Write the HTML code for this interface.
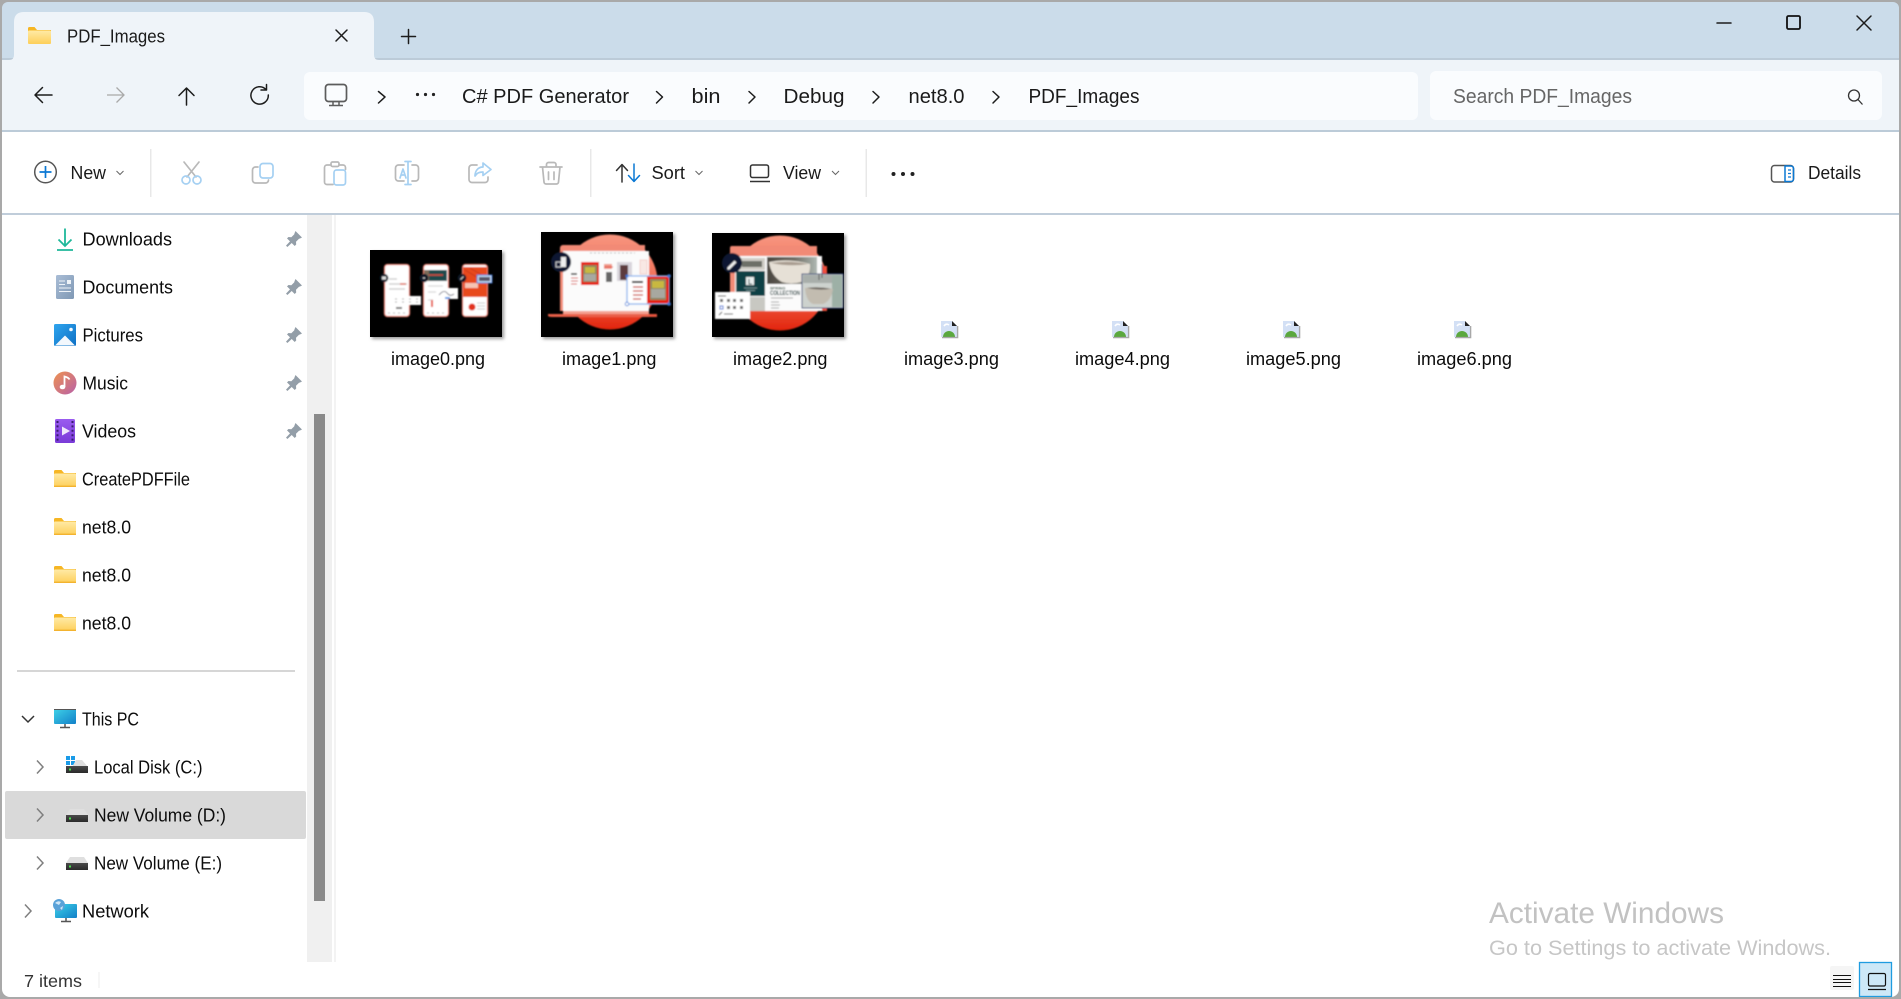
<!DOCTYPE html>
<html lang="en">
<head>
<meta charset="utf-8">
<title>PDF_Images - File Explorer</title>
<style>
html,body{margin:0;padding:0;width:1901px;height:999px;overflow:hidden;background:#fff}
svg{position:absolute;left:0;top:0;display:block}
text{font-family:"Liberation Sans",sans-serif;fill:#1b1b1b}
.side{font-size:18.5px;fill:#0c0c0c}
.crumb{font-size:20.5px;fill:#1a1a1a}
.cmd{font-size:18px;fill:#1a1a1a}
.file{font-size:18px;fill:#0c0c0c}
.ln{fill:none;stroke:#1c1c1c;stroke-width:1.5;stroke-linecap:round;stroke-linejoin:round}
.gr{fill:none;stroke:#b9b9b9;stroke-width:1.7;stroke-linecap:round;stroke-linejoin:round}
.bl{fill:none;stroke:#a5d0f2;stroke-width:1.7;stroke-linecap:round;stroke-linejoin:round}
</style>
</head>
<body>
<svg width="1901" height="999" viewBox="0 0 1901 999" xmlns="http://www.w3.org/2000/svg">
<defs>
<linearGradient id="fold" x1="0" y1="0" x2="0" y2="1"><stop offset="0" stop-color="#ffeaa6"/><stop offset="1" stop-color="#fdcf5a"/></linearGradient>
<linearGradient id="circ" x1="0" y1="0" x2="0" y2="1"><stop offset="0" stop-color="#f7957f"/><stop offset=".62" stop-color="#f0644b"/><stop offset="1" stop-color="#e2240c"/></linearGradient>
<linearGradient id="doc" x1="0" y1="0" x2="1" y2="1"><stop offset="0" stop-color="#a9bdd6"/><stop offset="1" stop-color="#7f98b4"/></linearGradient>
<linearGradient id="pic" x1="0" y1="0" x2="1" y2="1"><stop offset="0" stop-color="#2fa5ee"/><stop offset="1" stop-color="#0d6fc4"/></linearGradient>
<linearGradient id="mus" x1="0" y1="0" x2="1" y2="1"><stop offset="0" stop-color="#ee9250"/><stop offset="1" stop-color="#b860a8"/></linearGradient>
<linearGradient id="vid" x1="0" y1="0" x2="0" y2="1"><stop offset="0" stop-color="#9a5cf0"/><stop offset="1" stop-color="#7a3bd8"/></linearGradient>
<linearGradient id="pc" x1="0" y1="0" x2="1" y2="1"><stop offset="0" stop-color="#3ed2e8"/><stop offset="1" stop-color="#1280c8"/></linearGradient>
<linearGradient id="drv" x1="0" y1="0" x2="0" y2="1"><stop offset="0" stop-color="#4a4a4a"/><stop offset="1" stop-color="#2a2a2a"/></linearGradient>
<linearGradient id="tub" x1="0" y1="0" x2="1" y2="0"><stop offset="0" stop-color="#4a463f"/><stop offset=".55" stop-color="#6f6c64"/><stop offset="1" stop-color="#aeb8b2"/></linearGradient>
<filter id="b" x="-5%" y="-5%" width="110%" height="110%"><feGaussianBlur stdDeviation=".7"/></filter>
<filter id="sh" x="-10%" y="-10%" width="120%" height="120%"><feGaussianBlur stdDeviation="1.6"/></filter>
<clipPath id="c1"><rect x="541" y="232" width="132" height="105"/></clipPath>
<clipPath id="c2"><rect x="712" y="233" width="132" height="104"/></clipPath>
<g id="pin"><path d="M9.5 0 16 6.5l-2 1-1 .2-3 3 .2 2.8-1.5 1.5-3-3L1.4 16 0 14.6l4-4.2-3-3L2.5 6l2.8.2 3-3 .2-1z" fill="#939ea8"/></g>
<g id="folder"><path d="M0 3V1.500A1.500 1.500 0 0 1 1.500 0h6L10 3h12v2H0z" fill="#f6b624"/><rect x="0" y="3.500" width="22" height="13.500" rx="1" fill="url(#fold)"/><rect x="0" y="15.600" width="22" height="1.400" fill="#f3b32f"/></g>
<g id="drive"><path d="M4 0h14l4 6H0z" fill="#dfdfdf"/><rect x="0" y="6" width="22" height="7" fill="url(#drv)"/><rect x="3" y="8.500" width="2" height="2" fill="#47e04c"/></g>
<g id="broken"><path d="M0 0h11l5 5v11H0z" fill="#d3e0f5"/><path d="M11 0l5 5h-5z" fill="#222"/><path d="M2 16a6 6 0 0 1 12 0z" fill="#5ba83e"/><path d="M3 5q2-3 5-1" stroke="#fff" stroke-width="1.600" fill="none"/><path d="M1 16.600h15.600V5" stroke="#a8a8a8" stroke-width="1.400" fill="none"/></g>
</defs>

<!-- Window background -->
<rect width="1901" height="999" fill="#fff"/>
<rect x="0" y="0" width="1901" height="60" fill="#cbdcea"/>
<rect x="0" y="60" width="1901" height="70" fill="#eff4f9"/>
<rect x="0" y="58" width="1901" height="2" fill="#bccbd8"/>
<rect x="0" y="130" width="1901" height="2" fill="#bccbd8"/>
<rect x="0" y="213" width="1901" height="2" fill="#c0cdda"/>

<!-- Tab -->
<path d="M9 60q5 0 5-5V22q0-10 10-10h340q10 0 10 10v33q0 5 5 5z" fill="#eff4f9"/>
<g transform="translate(28,27)"><path d="M0 3V1.500A1.500 1.500 0 0 1 1.500 0h5L9 3h14v2H0z" fill="#f6b624"/><rect y="3.500" width="23" height="13.500" rx="1" fill="url(#fold)"/></g>
<text x="67" y="42.500" font-size="18" textLength="98" lengthAdjust="spacingAndGlyphs">PDF_Images</text>
<path class="ln" d="M336 30l11 11M347 30l-11 11" stroke-width="1.300"/>
<path class="ln" d="M408.500 29.500v14M401.500 36.500h14" stroke-width="1.300"/>

<!-- Window controls -->
<path class="ln" d="M1717 23h14" stroke-width="1.300"/>
<rect x="1787" y="16" width="13" height="13" rx="1.500" fill="none" stroke="#111" stroke-width="1.800"/>
<path class="ln" d="M1857 16l14 14M1871 16l-14 14" stroke-width="1.300"/>

<!-- Nav icons -->
<path class="ln" d="M52 95H35M42.500 87.500 35 95l7.500 7.500" stroke-width="1.300"/>
<path d="M107 95h17M116.500 87.500 124 95l-7.500 7.500" fill="none" stroke="#a9a9a9" stroke-width="1.300"/>
<path class="ln" d="M186.500 105V88M179 95.500l7.500-7.500 7.500 7.500" stroke-width="1.300"/>
<path class="ln" d="M266 89.500A8.700 8.700 0 1 0 268.300 95M266.500 84.500v5.500h-5.500" stroke-width="1.300"/>

<!-- Address bar + search -->
<rect x="304" y="72" width="1114" height="48" rx="6" fill="#fafcfe"/>
<rect x="1430" y="71" width="452" height="49" rx="6" fill="#fafcfe"/>
<rect x="325.500" y="84.500" width="21" height="17" rx="3" fill="none" stroke="#5c5c5c" stroke-width="1.700"/>
<path d="M333 102v3M339 102v3M329 105.500h14" stroke="#5c5c5c" stroke-width="1.500" fill="none"/>
<path class="ln" d="M378.500 91.500 385 97l-6.500 6" stroke-width="1.600"/>
<circle cx="417.500" cy="94.500" r="1.600" fill="#222"/><circle cx="425.500" cy="94.500" r="1.600" fill="#222"/><circle cx="433.500" cy="94.500" r="1.600" fill="#222"/>
<text class="crumb" x="462" y="103" textLength="167" lengthAdjust="spacingAndGlyphs">C# PDF Generator</text>
<path class="ln" d="M656.500 91.500 662.500 97l-6 6" stroke-width="1.500"/>
<text class="crumb" x="691.500" y="103" textLength="29" lengthAdjust="spacingAndGlyphs">bin</text>
<path class="ln" d="M749 91.500 755 97l-6 6" stroke-width="1.500"/>
<text class="crumb" x="783.500" y="103" textLength="61" lengthAdjust="spacingAndGlyphs">Debug</text>
<path class="ln" d="M873 91.500 879 97l-6 6" stroke-width="1.500"/>
<text class="crumb" x="908.500" y="103" textLength="56" lengthAdjust="spacingAndGlyphs">net8.0</text>
<path class="ln" d="M993 91.500 999 97l-6 6" stroke-width="1.500"/>
<text class="crumb" x="1028.500" y="103" textLength="111" lengthAdjust="spacingAndGlyphs">PDF_Images</text>
<text class="crumb" x="1453" y="103" textLength="179" lengthAdjust="spacingAndGlyphs" style="fill:#666">Search PDF_Images</text>
<circle cx="1854" cy="95.500" r="5.500" fill="none" stroke="#333" stroke-width="1.300"/>
<path d="M1858 99.500 1862.500 104.500" stroke="#333" stroke-width="1.300"/>

<!-- Command bar -->
<circle cx="45.500" cy="172" r="10.800" fill="none" stroke="#555" stroke-width="1.500"/>
<path d="M45.500 166v12M39.500 172h12" stroke="#0a78d4" stroke-width="1.700"/>
<text class="cmd" x="70.500" y="179" textLength="35.500" lengthAdjust="spacingAndGlyphs">New</text>
<path d="M116.500 171l3.500 3.500 3.500-3.500" fill="none" stroke="#666" stroke-width="1"/>
<rect x="150" y="149" width="1.500" height="48" fill="#e8e8e8"/>
<rect x="590" y="149" width="1.500" height="48" fill="#e8e8e8"/>
<rect x="865.500" y="149" width="1.500" height="48" fill="#e8e8e8"/>

<!-- scissors -->
<path class="gr" d="M184 162l12 15M199 162l-12 15"/>
<circle class="bl" cx="186" cy="180" r="4"/><circle class="bl" cx="197" cy="180" r="4"/>
<!-- copy -->
<path class="gr" d="M258 167h-2.500a3 3 0 0 0-3 3v10a3 3 0 0 0 3 3h10a3 3 0 0 0 3-3"/>
<rect class="bl" x="260" y="163.500" width="13" height="14.500" rx="3"/>
<!-- paste -->
<path class="gr" d="M331 165h-4a2.500 2.500 0 0 0-2.500 2.500V182a2.500 2.500 0 0 0 2.500 2.500h6M339 165h4a2.500 2.500 0 0 1 2.500 2.500v2"/>
<rect class="gr" x="331" y="162" width="8" height="4.500" rx="1.500"/>
<rect class="bl" x="334" y="170" width="11.500" height="15" rx="2.500"/>
<!-- rename -->
<path class="gr" d="M404 165h-5.500a3 3 0 0 0-3 3v10a3 3 0 0 0 3 3h5.500M412 165h3.500a3 3 0 0 1 3 3v10a3 3 0 0 1-3 3H412"/>
<path class="bl" d="M405 161.500h6M405 184.500h6M408 161.500v23M400 178l3-9 3 9M401 175h4"/>
<!-- share -->
<path class="gr" d="M477 165h-5a3 3 0 0 0-3 3v11.500a3 3 0 0 0 3 3h13a3 3 0 0 0 3-3V177"/>
<path class="bl" d="M483 163l8 6.500-8 6v-3.500c-4 0-6 1-8 4 0-5 3-9 8-9z"/>
<!-- delete -->
<path class="gr" d="M540 167h22M546.500 167v-2.500a2 2 0 0 1 2-2h5.500a2 2 0 0 1 2 2v2M542.500 167l1.500 15a2 2 0 0 0 2 2h10.500a2 2 0 0 0 2-2l1.500-15M548.500 172v7.500M554 172v7.500"/>

<!-- Sort -->
<path class="ln" d="M622 182v-17M616.500 170.500l5.500-6 5.500 6" stroke-width="1.300" style="stroke:#333"/>
<path d="M634 164v17M628.500 175.500l5.500 6 5.500-6" fill="none" stroke="#0a78d4" stroke-width="1.500" stroke-linecap="round" stroke-linejoin="round"/>
<text class="cmd" x="651.500" y="179" textLength="33.500" lengthAdjust="spacingAndGlyphs">Sort</text>
<path d="M695.500 171l3.500 3.500 3.500-3.500" fill="none" stroke="#666" stroke-width="1"/>
<!-- View -->
<rect x="750.500" y="165" width="18" height="12.500" rx="2" fill="none" stroke="#333" stroke-width="1.500"/>
<path d="M750 181.500h20" stroke="#333" stroke-width="1.500"/>
<text class="cmd" x="783" y="179" textLength="38" lengthAdjust="spacingAndGlyphs">View</text>
<path d="M832 171l3.500 3.500 3.500-3.500" fill="none" stroke="#666" stroke-width="1"/>
<circle cx="893.500" cy="174" r="2" fill="#222"/><circle cx="903" cy="174" r="2" fill="#222"/><circle cx="912.500" cy="174" r="2" fill="#222"/>
<!-- Details -->
<rect x="1771.500" y="165.500" width="22" height="16.500" rx="3" fill="none" stroke="#555" stroke-width="1.500"/>
<path d="M1785 166h6a2.500 2.500 0 0 1 2.500 2.500V179a2.500 2.500 0 0 1-2.500 2.500h-6z" fill="none" stroke="#0a78d4" stroke-width="1.500"/>
<path d="M1788 170h3M1788 173.500h3M1788 177h3" stroke="#0a78d4" stroke-width="1.300"/>
<text class="cmd" x="1808" y="179" textLength="53" lengthAdjust="spacingAndGlyphs">Details</text>

<!-- Sidebar scrollbar -->
<rect x="307" y="215" width="25" height="747" fill="#f0f0f0"/>
<rect x="334" y="215" width="2" height="747" fill="#f3f3f3"/>
<rect x="314" y="414" width="11" height="487" fill="#8a8a8a"/>

<!-- Sidebar selection -->
<rect x="5" y="791" width="301" height="48" rx="2" fill="#d9d9d9"/>

<!-- Sidebar icons -->
<path d="M65 228.500v17M58.500 239.500l6.500 6.500 6.500-6.500M57 250h16" fill="none" stroke="#1fb89a" stroke-width="1.800"/>
<rect x="56" y="275" width="18" height="24" rx="1.500" fill="url(#doc)"/>
<path d="M59 281h6M59 284.500h6M59 288h12M59 291.500h12" stroke="#eef3f8" stroke-width="1.100"/><rect x="67" y="280" width="4" height="4" fill="#eef3f8"/>
<rect x="54" y="324" width="22" height="22" rx="1.500" fill="url(#pic)"/>
<path d="M55 345.500 65 335.500l10 10z" fill="#f3f8fd"/><circle cx="71" cy="329.500" r="1.800" fill="#f3f8fd"/>
<circle cx="65" cy="383" r="11.500" fill="url(#mus)"/>
<path d="M64.500 387V376.500c2 .5 4 1 5 3" fill="none" stroke="#fff" stroke-width="1.800"/><ellipse cx="62.500" cy="387" rx="2.800" ry="2.300" fill="#fff"/>
<rect x="55" y="419" width="20" height="24" rx="1.500" fill="url(#vid)"/>
<path d="M62 426.500v9l8-4.500z" fill="#efe8fb"/>
<path d="M57.500 421v20M72.500 421v20" stroke="#3a1b70" stroke-width="2" stroke-dasharray="2 2.400"/>
<use href="#pin" x="286" y="231"/><use href="#pin" x="286" y="279"/><use href="#pin" x="286" y="327"/><use href="#pin" x="286" y="375"/><use href="#pin" x="286" y="423"/>
<use href="#folder" x="54" y="470"/><use href="#folder" x="54" y="518"/><use href="#folder" x="54" y="566"/><use href="#folder" x="54" y="614"/>

<rect x="17" y="670" width="278" height="2" fill="#d6d6d6"/>

<path d="M22 716l6 6 6-6" fill="none" stroke="#333" stroke-width="1.500"/>
<rect x="54" y="709" width="22" height="15" rx="1" fill="url(#pc)"/><path d="M54 709.500h22" stroke="#555" stroke-width="1"/>
<path d="M65 724v3M60 727.500h10" stroke="#555" stroke-width="1.500"/>
<path d="M37 760.500l6 6.500-6 6.500M37 808.500l6 6.500-6 6.500M37 856.500l6 6.500-6 6.500M25 904.500l6 6.500-6 6.500" fill="none" stroke="#7f7f7f" stroke-width="1.500"/>
<rect x="66" y="756" width="4" height="4" fill="#1a9be8"/><rect x="71" y="756" width="4" height="4" fill="#1a9be8"/><rect x="66" y="761" width="4" height="4" fill="#1a9be8"/><rect x="71" y="761" width="4" height="4" fill="#1a9be8"/>
<path d="M76 760h6l6 7H72z" fill="#dfdfdf"/><rect x="66" y="766" width="22" height="7" fill="url(#drv)"/><rect x="69" y="768.500" width="2" height="2" fill="#47e04c"/>
<use href="#drive" x="66" y="809"/><use href="#drive" x="66" y="857"/>
<rect x="55" y="904" width="22" height="14" rx="1" fill="url(#pc)"/>
<path d="M66 918v3M61 921.500h10" stroke="#555" stroke-width="1.500"/>
<circle cx="59" cy="905" r="6" fill="#5aa2d8"/><path d="M55 903q3-3 6-1l-2 3zM60 908l3-2-1 4z" fill="#cfe6f7"/>

<!-- Sidebar text -->
<text class="side" x="82.500" y="245.500" textLength="89.500" lengthAdjust="spacingAndGlyphs">Downloads</text>
<text class="side" x="82.500" y="293.500" textLength="90.500" lengthAdjust="spacingAndGlyphs">Documents</text>
<text class="side" x="82.500" y="341.500" textLength="60.500" lengthAdjust="spacingAndGlyphs">Pictures</text>
<text class="side" x="82.500" y="389.500" textLength="45.500" lengthAdjust="spacingAndGlyphs">Music</text>
<text class="side" x="82" y="437.500" textLength="54" lengthAdjust="spacingAndGlyphs">Videos</text>
<text class="side" x="82" y="485.500" textLength="108" lengthAdjust="spacingAndGlyphs">CreatePDFFile</text>
<text class="side" x="82" y="533.500" textLength="49" lengthAdjust="spacingAndGlyphs">net8.0</text>
<text class="side" x="82" y="581.500" textLength="49" lengthAdjust="spacingAndGlyphs">net8.0</text>
<text class="side" x="82" y="629.500" textLength="49" lengthAdjust="spacingAndGlyphs">net8.0</text>
<text class="side" x="82" y="725.500" textLength="57" lengthAdjust="spacingAndGlyphs">This PC</text>
<text class="side" x="94" y="773.500" textLength="108.500" lengthAdjust="spacingAndGlyphs">Local Disk (C:)</text>
<text class="side" x="94" y="821.500" textLength="132" lengthAdjust="spacingAndGlyphs">New Volume (D:)</text>
<text class="side" x="94" y="869.500" textLength="128" lengthAdjust="spacingAndGlyphs">New Volume (E:)</text>
<text class="side" x="82" y="917.500" textLength="67" lengthAdjust="spacingAndGlyphs">Network</text>

<!-- Thumbnail 0 -->
<rect x="372" y="252" width="132" height="87" fill="#999" filter="url(#sh)"/>
<rect x="370" y="250" width="132" height="87" fill="#000"/>
<g filter="url(#b)">
<rect x="384.500" y="264.500" width="25" height="52" rx="3" fill="#fff" stroke="#ec8070" stroke-width="1.300"/>
<rect x="423.500" y="264.500" width="25" height="52" rx="3" fill="#fff" stroke="#ec8070" stroke-width="1.300"/>
<rect x="462.500" y="264.500" width="25" height="52" rx="3" fill="#fff" stroke="#ec8070" stroke-width="1.300"/>
<rect x="463" y="267" width="24" height="30" fill="#e8481f"/>
<path d="M465 270l20 12M470 268l17 10" stroke="#c8381a" stroke-width="1"/>
<rect x="465" y="283" width="13" height="5" fill="#f6c4b4"/>
<circle cx="472" cy="307" r="3.500" fill="#e2301a"/>
<path d="M477 303h8M477 306h8M477 309h8" stroke="#bbb" stroke-width=".8"/>
<rect x="428" y="270" width="19" height="11" fill="#1b4a4c"/><rect x="424" y="270" width="5" height="11" fill="#7b6a58"/>
<path d="M429 275h14" stroke="#d64a3a" stroke-width="1.500"/>
<path d="M389 279h8M389 284h18M389 289h16" stroke="#c8c8c8" stroke-width="1.200"/><path d="M400 284h6" stroke="#e06a58" stroke-width="1.500"/>
<path d="M428 286h15M428 292h10M428 300h5" stroke="#d8d8d8" stroke-width="1.200"/>
<rect x="431" y="300" width="2" height="7" fill="#e8503a"/>
<path d="M388 313h20M427 313h20" stroke="#b0b0b0" stroke-width="1" stroke-dasharray="2 3"/>
<rect x="392" y="296" width="29" height="9" fill="#fff"/>
<path d="M395 299h24M395 302h24" stroke="#aaa" stroke-width="1" stroke-dasharray="2 5"/>
<rect x="396" y="307" width="6" height="2" fill="#777"/>
<rect x="436" y="288" width="22" height="11" fill="#fff"/>
<path d="M439 295q5-6 8-2t7 1" fill="none" stroke="#667" stroke-width=".8"/><rect x="445" y="297" width="5" height="2" fill="#5a9be8"/>
<rect x="477" y="275" width="15" height="8" fill="#bcd3f0" stroke="#3b78d8" stroke-width=".8"/><rect x="479" y="277" width="11" height="4" fill="#556"/>
<circle cx="384" cy="278" r="4.300" fill="#0c1526"/><circle cx="424" cy="278" r="4.300" fill="#0c1526"/><circle cx="462" cy="278" r="4.300" fill="#0c1526"/>
<rect x="382" y="276.500" width="4" height="3" fill="#ddd"/><rect x="423" y="277.500" width="2" height="1" fill="#ddd"/><path d="M460.500 279.500l3-3" stroke="#ddd"/>
</g>

<!-- Thumbnail 1 -->
<rect x="543" y="234" width="132" height="105" fill="#999" filter="url(#sh)"/>
<rect x="541" y="232" width="132" height="105" fill="#000"/>
<g clip-path="url(#c1)"><g filter="url(#b)">
<circle cx="610" cy="282" r="47.500" fill="url(#circ)"/>
<path d="M561 245h24l60 0v6h-82v60h-3v-63a3 3 0 0 1 3-3z" fill="#f28a76"/>
<rect x="563" y="251" width="86" height="60" fill="#fbfbfb"/>
<path d="M563 311h86v3h-86z" fill="#f4a090"/>
<path d="M548 314h101v3H552q-4 0-4-1.500z" fill="#ea6048"/>
<rect x="649" y="314" width="8" height="3" fill="#e8543c"/>
<rect x="581" y="262" width="18" height="23" fill="#e61a0a"/><rect x="583" y="265" width="14" height="17" fill="#8c8560"/><rect x="585" y="267" width="10" height="6" fill="#c8b840"/><rect x="584" y="274" width="12" height="7" fill="#a8a8a0"/>
<rect x="570" y="272" width="9" height="13" fill="#fff"/><path d="M571 274h6" stroke="#222" stroke-width="1.500"/><path d="M571 278h7M571 281h7M571 284h6" stroke="#d84030" stroke-width="1"/>
<rect x="604" y="264" width="8" height="5" fill="#f09888"/><rect x="606" y="272" width="6" height="10" fill="#666"/><path d="M604 267h9" stroke="#e04030"/>
<rect x="617" y="262" width="15" height="19" fill="#d8d4dc"/><rect x="620" y="265" width="8" height="15" fill="#5c3a3c"/>
<rect x="640" y="260" width="7" height="14" fill="#f8e8e4" stroke="#eeb0a8" stroke-width=".5"/>
<path d="M590 253h45" stroke="#bbb" stroke-width="1" stroke-dasharray="2 2"/>
<rect x="627" y="276" width="42" height="28" fill="#fff" stroke="#8ab4ee" stroke-width="1.300"/>
<rect x="647" y="276.500" width="22" height="27" fill="#e61a0a"/><rect x="650" y="279" width="16" height="21" fill="#8c8560"/><rect x="652" y="281" width="12" height="7" fill="#c8b840"/><rect x="651" y="289" width="14" height="9" fill="#a8a8a0"/>
<path d="M632 282h11" stroke="#222" stroke-width="2"/><path d="M633 287h10M633 291h10M633 295h10M633 299h8" stroke="#cc4030" stroke-width="1.200"/>
<circle cx="627" cy="304" r="1.800" fill="#fff" stroke="#3b78d8" stroke-width=".8"/><circle cx="669" cy="276" r="1.800" fill="#3b78d8"/><circle cx="669" cy="304" r="1.800" fill="#3b78d8"/><circle cx="627" cy="276" r="1.500" fill="#3b78d8"/>
<circle cx="561" cy="262" r="10" fill="#0a1830"/>
<rect x="556" y="262" width="5" height="5" fill="none" stroke="#eee" stroke-width=".8"/><rect x="561" y="257" width="5" height="10" fill="#eee"/>
</g></g>

<!-- Thumbnail 2 -->
<rect x="714" y="235" width="132" height="104" fill="#999" filter="url(#sh)"/>
<rect x="712" y="233" width="132" height="104" fill="#000"/>
<g clip-path="url(#c2)"><g filter="url(#b)">
<circle cx="780" cy="283" r="47.500" fill="url(#circ)"/>
<path d="M732 246h85v10h-82v55h-5v-63a2 2 0 0 1 2-2z" fill="#f28a76"/>
<rect x="735" y="256" width="87" height="55" fill="#fbfbfb"/>
<rect x="822" y="266" width="5" height="45" fill="#f0503a"/>
<rect x="737" y="258" width="28" height="12" fill="#cfcdc6"/><rect x="742" y="261" width="20" height="6" fill="#6d7068"/>
<rect x="736" y="271" width="29" height="25" fill="#0f4045"/>
<rect x="746" y="277" width="8" height="8" fill="#e8eeee"/><path d="M749 279v5h3" stroke="#0f4045" stroke-width="1" fill="none"/>
<path d="M744 288h13M746 290.500h9" stroke="#8fa8aa" stroke-width=".8"/>
<rect x="736" y="297" width="29" height="14" fill="#c8c8c2"/>
<rect x="767" y="257" width="50" height="27" fill="url(#tub)"/>
<path d="M769 262q20-4 41 2q1 12-9 18q-10 3-19 0q-11-6-13-20z" fill="#e6e0d6"/><path d="M771 263q18-3 37 1q-18 3-37-1z" fill="#a89c90"/>
<text x="770" y="289.500" font-size="4" font-family="Liberation Serif" style="fill:#243" font-weight="700">SPRING</text>
<text x="770" y="295" font-size="6.500" font-family="Liberation Serif" style="fill:#133" font-weight="700" textLength="30" lengthAdjust="spacingAndGlyphs">COLLECTION</text>
<path d="M771 298h22M771 302h8M771 305h9M771 308h8" stroke="#888" stroke-width=".8"/>
<rect x="802" y="274" width="41" height="34" fill="#cdd2ce" stroke="#24407a" stroke-width="1"/>
<rect x="803" y="275" width="39" height="8" fill="#a8aeaa"/><rect x="832" y="275" width="10" height="32" fill="#9db0a6"/>
<path d="M805 288q14-2 28 1q-2 12-10 15h-10q-7-3-8-16z" fill="#c2bcb0"/><path d="M807 288q12-1.500 24 .8q-12 2-24-.8z" fill="#6a655e"/>
<path d="M819 280v-6M822 272l0 6" stroke="#555" stroke-width="1"/>
<path d="M822 274v-10" stroke="#55618a" stroke-width="1"/>
<rect x="715" y="292" width="35" height="27" fill="#fff"/>
<path d="M718 296h8" stroke="#333" stroke-width="1"/>
<path d="M720 299h3v3h-3zM727 299h3v3h-3zM733 299h3v3h-3zM740 299h3v3h-3zM727 306h3v3h-3zM733 306h3v3h-3zM740 306h3v3h-3z" fill="#6b6b6b"/>
<rect x="720" y="306" width="3" height="3" fill="none" stroke="#2a6ed8" stroke-width="1"/>
<path d="M719 315l3-3M724 314h9" stroke="#444" stroke-width="1"/>
<circle cx="732" cy="263" r="10" fill="#0a1830"/>
<path d="M727.500 267.500l7-7 2 2-7 7h-2z" fill="#eee"/>
</g></g>

<!-- Broken icons -->
<use href="#broken" x="941" y="321"/><use href="#broken" x="1112" y="321"/><use href="#broken" x="1283" y="321"/><use href="#broken" x="1454" y="321"/>

<!-- File names -->
<text class="file" x="391" y="365" textLength="94" lengthAdjust="spacingAndGlyphs">image0.png</text>
<text class="file" x="562" y="365" textLength="94.500" lengthAdjust="spacingAndGlyphs">image1.png</text>
<text class="file" x="733" y="365" textLength="94.500" lengthAdjust="spacingAndGlyphs">image2.png</text>
<text class="file" x="904" y="365" textLength="95" lengthAdjust="spacingAndGlyphs">image3.png</text>
<text class="file" x="1075" y="365" textLength="95" lengthAdjust="spacingAndGlyphs">image4.png</text>
<text class="file" x="1246" y="365" textLength="95" lengthAdjust="spacingAndGlyphs">image5.png</text>
<text class="file" x="1417" y="365" textLength="95" lengthAdjust="spacingAndGlyphs">image6.png</text>

<!-- Activate Windows -->
<text x="1489" y="923" font-size="30" textLength="235" lengthAdjust="spacingAndGlyphs" style="fill:#c2c2c2">Activate Windows</text>
<text x="1489" y="955" font-size="21.500" textLength="342" lengthAdjust="spacingAndGlyphs" style="fill:#c6c6c6">Go to Settings to activate Windows.</text>

<!-- Status bar -->
<text x="24" y="987" font-size="17.500" textLength="58" lengthAdjust="spacingAndGlyphs" style="fill:#333">7 items</text>
<rect x="98.500" y="972" width="1" height="16" fill="#eeeeee"/>
<rect x="1830" y="966" width="24" height="24" rx="2" fill="#f5f5f5"/>
<path d="M1833 975.500h18M1833 979.500h18M1833 982.500h18M1833 986.500h18" stroke="#111" stroke-width="1.100"/>
<rect x="1859.500" y="962.500" width="32" height="34" fill="#cde8f7" stroke="#1f9ce0" stroke-width="1.300"/>
<rect x="1868.500" y="973.500" width="17" height="12.500" rx="1.500" fill="none" stroke="#111" stroke-width="1.200"/>
<path d="M1868 989.500h18" stroke="#111" stroke-width="1.200"/>

<!-- Window border -->
<path d="M1901 0H0v999h1901zM8 2H1893a6 6 0 0 1 6 6V989a8 8 0 0 1-8 8H10a8 8 0 0 1-8-8V8a6 6 0 0 1 6-6z" fill="#a9a9a9" fill-rule="evenodd"/>
</svg>
</body>
</html>
